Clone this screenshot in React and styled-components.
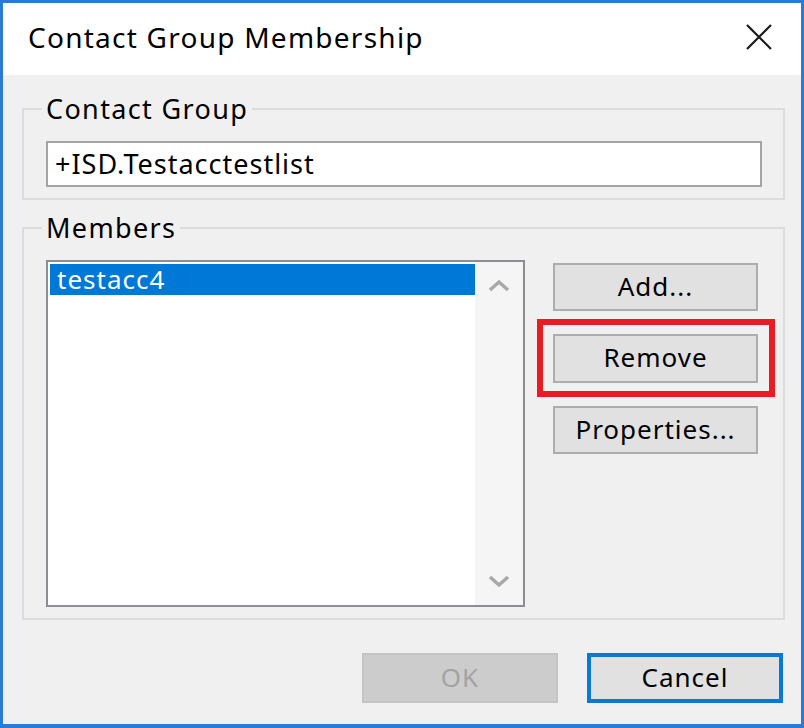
import React from "react";
import styled, { createGlobalStyle } from "styled-components";

const GlobalStyle = createGlobalStyle`
  html, body { margin: 0; padding: 0; background: #ffffff; }
  * { box-sizing: border-box; }
  body { font-family: "Noto Sans", "Open Sans", sans-serif; }
`;

const FONT = `"Noto Sans", "Open Sans", sans-serif`;

const Window = styled.div`
  width: 804px;
  height: 728px;
  border: 3px solid #2b7bd6;
  border-bottom-width: 4px;
  display: flex;
  flex-direction: column;
  background: #f0f0f0;
  font-family: ${FONT};
  color: #000;
`;

const TitleBar = styled.div`
  height: 72px;
  flex: none;
  background: #ffffff;
  display: flex;
  align-items: center;
  justify-content: space-between;
  padding: 0 29px 4px 25px;
`;

const Title = styled.div`
  font-size: 28px;
  letter-spacing: 1.25px;
  line-height: 34px;
`;

const CloseButton = styled.button`
  border: none;
  background: transparent;
  padding: 0;
  width: 26px;
  height: 26px;
  display: flex;
  align-items: center;
  justify-content: center;
`;

const Content = styled.div`
  flex: 1;
  display: flex;
  flex-direction: column;
  padding: 19px 16px 0 19px;
`;

const Group = styled.fieldset`
  margin: ${(p) => (p.$gap ? "13px 0 0 0" : "0")};
  border: 2px solid #dcdcdc;
  padding: 17px ${(p) => p.$right}px 11px 22px;
  min-width: 0;
  ${(p) => p.$grow && "flex: 1;"}
`;

const Legend = styled.legend`
  font-size: 27px;
  letter-spacing: 1.35px;
  line-height: 30px;
  padding: 0 4px;
  margin-left: -4px;
`;

const TextField = styled.div`
  height: 46px;
  background: #ffffff;
  border: 2px solid #a4a4a4;
  display: flex;
  align-items: center;
  padding: 0 7px 2px 7px;
  font-size: 27px;
  letter-spacing: 1px;
`;

const MembersGrid = styled.div`
  display: grid;
  grid-template-columns: 1fr 205px;
  column-gap: 28px;
  height: 100%;
`;

const ListBox = styled.div`
  height: 347px;
  border: 2px solid #8d8e93;
  background: #ffffff;
  display: flex;
`;

const ListItems = styled.div`
  flex: 1;
  padding: 2px 0 2px 2px;
`;

const ListItem = styled.div`
  height: 31px;
  line-height: 31px;
  padding-left: 7px;
  font-size: 26px;
  letter-spacing: 1px;
  background: ${(p) => (p.$selected ? "#0078d7" : "transparent")};
  color: ${(p) => (p.$selected ? "#ffffff" : "#000000")};
`;

const ScrollBar = styled.div`
  width: 48px;
  background: #f5f5f5;
  display: flex;
  flex-direction: column;
  justify-content: space-between;
`;

const ScrollArrow = styled.div`
  width: 48px;
  height: 48px;
  display: flex;
  align-items: center;
  justify-content: center;
`;

const ButtonColumn = styled.div`
  display: flex;
  flex-direction: column;
  gap: 23px;
  padding-top: 3px;
`;

const Button = styled.button`
  height: ${(p) => p.$h || 48}px;
  width: ${(p) => (p.$w ? p.$w + "px" : "100%")};
  font-family: ${FONT};
  font-size: 26px;
  letter-spacing: 1px;
  color: ${(p) => (p.disabled ? "#a3a3a3" : "#000000")};
  background: ${(p) => (p.disabled ? "#cccccc" : "#e1e1e1")};
  border: ${(p) =>
    p.$default ? "4px solid #0a78d7" : p.disabled ? "2px solid #c4c4c4" : "2px solid #adadad"};
  padding: 0 0 3px 0;
  display: flex;
  align-items: center;
  justify-content: center;
`;

const Highlight = styled.div`
  position: relative;
  &::after {
    content: "";
    position: absolute;
    top: -15px;
    bottom: -14px;
    left: -16px;
    right: -17px;
    border: 6px solid #e91c24;
    pointer-events: none;
  }
`;

const Footer = styled.div`
  flex: none;
  display: flex;
  justify-content: flex-end;
  gap: 29px;
  padding: 33px 18px 21px 0;
`;

const Chevron = ({ down }) => (
  <svg width="22" height="14" viewBox="0 0 22 14">
    <path
      d={down ? "M2 3 L11 11 L20 3" : "M2 11 L11 3 L20 11"}
      fill="none"
      stroke="#a8a8a8"
      strokeWidth="3.5"
    />
  </svg>
);

export default function App() {
  return (
    <>
      <GlobalStyle />
      <Window>
        <TitleBar>
          <Title>Contact Group Membership</Title>
          <CloseButton aria-label="Close">
            <svg width="26" height="26" viewBox="0 0 26 26">
              <path d="M1 1 L25 25 M25 1 L1 25" stroke="#1a1a1a" strokeWidth="2.2" />
            </svg>
          </CloseButton>
        </TitleBar>
        <Content>
          <Group $right={21}>
            <Legend>Contact Group</Legend>
            <TextField>+ISD.Testacctestlist</TextField>
          </Group>
          <Group $right={25} $gap $grow>
            <Legend>Members</Legend>
            <MembersGrid>
              <ListBox>
                <ListItems>
                  <ListItem $selected>testacc4</ListItem>
                </ListItems>
                <ScrollBar>
                  <ScrollArrow>
                    <Chevron />
                  </ScrollArrow>
                  <ScrollArrow>
                    <Chevron down />
                  </ScrollArrow>
                </ScrollBar>
              </ListBox>
              <ButtonColumn>
                <Button>Add...</Button>
                <Highlight>
                  <Button $h={49}>Remove</Button>
                </Highlight>
                <Button>Properties...</Button>
              </ButtonColumn>
            </MembersGrid>
          </Group>
        </Content>
        <Footer>
          <Button disabled $w={196} $h={50}>OK</Button>
          <Button $default $w={196} $h={50}>Cancel</Button>
        </Footer>
      </Window>
    </>
  );
}
